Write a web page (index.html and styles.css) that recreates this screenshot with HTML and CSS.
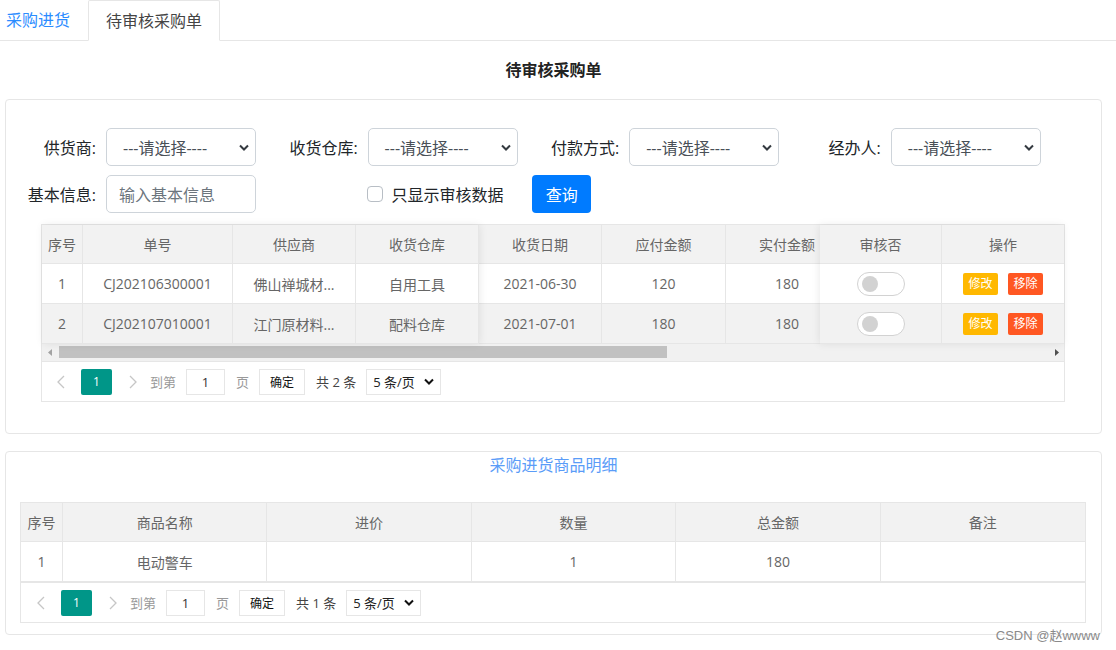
FILE: index.html
```html
<!DOCTYPE html>
<html lang="zh-CN">
<head>
<meta charset="utf-8">
<title>待审核采购单</title>
<link rel="stylesheet" href="styles.css">
</head>
<body>
<div class="tabs">
  <div class="tab tab-link">采购进货</div>
  <div class="tab tab-active">待审核采购单</div>
</div>

<main class="content">
  <h2 class="page-title">待审核采购单</h2>

  <section class="panel panel-main">
    <div class="form-row">
      <div class="field">
        <label class="field-label">供货商:</label>
        <div class="select"><span>---请选择----</span><svg class="chev" width="10" height="7" viewBox="0 0 10 7"><path d="M1 1.5l4 4 4-4" fill="none" stroke="#343a40" stroke-width="2"/></svg></div>
      </div>
      <div class="field">
        <label class="field-label">收货仓库:</label>
        <div class="select"><span>---请选择----</span><svg class="chev" width="10" height="7" viewBox="0 0 10 7"><path d="M1 1.5l4 4 4-4" fill="none" stroke="#343a40" stroke-width="2"/></svg></div>
      </div>
      <div class="field">
        <label class="field-label">付款方式:</label>
        <div class="select"><span>---请选择----</span><svg class="chev" width="10" height="7" viewBox="0 0 10 7"><path d="M1 1.5l4 4 4-4" fill="none" stroke="#343a40" stroke-width="2"/></svg></div>
      </div>
      <div class="field">
        <label class="field-label">经办人:</label>
        <div class="select"><span>---请选择----</span><svg class="chev" width="10" height="7" viewBox="0 0 10 7"><path d="M1 1.5l4 4 4-4" fill="none" stroke="#343a40" stroke-width="2"/></svg></div>
      </div>
    </div>
    <div class="form-row">
      <div class="field">
        <label class="field-label">基本信息:</label>
        <div class="text-input"><span class="placeholder">输入基本信息</span></div>
      </div>
      <div class="check-field"><span class="checkbox"></span><span>只显示审核数据</span></div>
      <button class="btn-primary">查询</button>
    </div>

    <div class="data-table">
      <div class="panes">
        <div class="pane pane-left">
          <div class="cell head">序号</div><div class="cell head">单号</div><div class="cell head">供应商</div><div class="cell head">收货仓库</div>
          <div class="cell">1</div><div class="cell">CJ202106300001</div><div class="cell">佛山禅城材...</div><div class="cell">自用工具</div>
          <div class="cell alt">2</div><div class="cell alt">CJ202107010001</div><div class="cell alt">江门原材料...</div><div class="cell alt">配料仓库</div>
        </div>
        <div class="pane pane-mid">
          <div class="cell head">收货日期</div><div class="cell head">应付金额</div><div class="cell head">实付金额</div>
          <div class="cell">2021-06-30</div><div class="cell">120</div><div class="cell">180</div>
          <div class="cell alt">2021-07-01</div><div class="cell alt">180</div><div class="cell alt">180</div>
        </div>
        <div class="pane pane-right">
          <div class="cell head">审核否</div><div class="cell head last">操作</div>
          <div class="cell"><span class="switch"><span class="knob"></span></span></div>
          <div class="cell last"><span class="btn-xs warm">修改</span><span class="btn-xs danger">移除</span></div>
          <div class="cell alt"><span class="switch"><span class="knob"></span></span></div>
          <div class="cell alt last"><span class="btn-xs warm">修改</span><span class="btn-xs danger">移除</span></div>
        </div>
      </div>
      <div class="hscroll">
        <span class="sb-arrow"><svg width="4" height="7" viewBox="0 0 4 7"><path d="M4 0v7L0 3.5z" fill="#a3a3a3"/></svg></span>
        <span class="sb-thumb"></span>
        <span class="sb-fill"></span>
        <span class="sb-arrow"><svg width="4" height="7" viewBox="0 0 4 7"><path d="M0 0v7l4-3.5z" fill="#505050"/></svg></span>
      </div>
      <div class="pager">
        <svg class="pg-arrow" width="8" height="14" viewBox="0 0 8 14"><path d="M7 1L1 7l6 6" stroke="#c6c6c6" fill="none" stroke-width="1.3"/></svg>
        <span class="pg-current">1</span>
        <svg class="pg-arrow pg-next" width="8" height="14" viewBox="0 0 8 14"><path d="M1 1l6 6-6 6" stroke="#c6c6c6" fill="none" stroke-width="1.3"/></svg>
        <span class="pg-text">到第</span>
        <span class="pg-input">1</span>
        <span class="pg-text">页</span>
        <span class="pg-btn">确定</span>
        <span class="pg-count">共 2 条</span>
        <span class="pg-select"><span>5 条/页</span><svg width="10" height="7" viewBox="0 0 10 7"><path d="M1 1.5l4 4 4-4" fill="none" stroke="#111" stroke-width="2"/></svg></span>
      </div>
    </div>
  </section>

  <section class="panel panel-detail">
    <h3 class="detail-title">采购进货商品明细</h3>
    <div class="detail-table">
      <div class="detail-grid">
        <div class="cell head">序号</div><div class="cell head">商品名称</div><div class="cell head">进价</div><div class="cell head">数量</div><div class="cell head">总金额</div><div class="cell head last">备注</div>
        <div class="cell">1</div><div class="cell">电动警车</div><div class="cell"></div><div class="cell">1</div><div class="cell">180</div><div class="cell last"></div>
      </div>
      <div class="pager pager-detail">
        <svg class="pg-arrow" width="8" height="14" viewBox="0 0 8 14"><path d="M7 1L1 7l6 6" stroke="#c6c6c6" fill="none" stroke-width="1.3"/></svg>
        <span class="pg-current">1</span>
        <svg class="pg-arrow pg-next" width="8" height="14" viewBox="0 0 8 14"><path d="M1 1l6 6-6 6" stroke="#c6c6c6" fill="none" stroke-width="1.3"/></svg>
        <span class="pg-text">到第</span>
        <span class="pg-input">1</span>
        <span class="pg-text">页</span>
        <span class="pg-btn">确定</span>
        <span class="pg-count">共 1 条</span>
        <span class="pg-select"><span>5 条/页</span><svg width="10" height="7" viewBox="0 0 10 7"><path d="M1 1.5l4 4 4-4" fill="none" stroke="#111" stroke-width="2"/></svg></span>
      </div>
    </div>
  </section>
</main>

<div class="watermark">CSDN @赵wwww</div>
</body>
</html>
```

FILE: styles.css
```css
* { box-sizing: border-box; }

body {
  margin: 0;
  width: 1116px;
  height: 650px;
  overflow: hidden;
  position: relative;
  background: #fff;
  color: #333;
  font-family: "Open Sans", "Noto Sans CJK SC", sans-serif;
}

/* tabs */
.tabs {
  display: flex;
  height: 41px;
  border-bottom: 1px solid #e6e6e6;
}
.tab {
  height: 41px;
  line-height: 40px;
  font-size: 16px;
}
.tab-link {
  color: #2b8cff;
  padding: 0 16px 0 6px;
  width: 88px;
}
.tab-active {
  color: #444;
  background: #fff;
  border: 1px solid #e6e6e6;
  border-bottom-color: #fff;
  border-radius: 2px 2px 0 0;
  padding: 0 16px 0 17px;
  width: 132px;
}

.content {
  margin: 0 14px 0 5px;
}

.page-title {
  margin: 18px 0 18px;
  text-align: center;
  font-size: 16px;
  line-height: 22px;
  font-weight: bold;
  color: #222;
}

.panel {
  border: 1px solid #e6e6e6;
  border-radius: 4px;
  background: #fff;
}
.panel-main {
  padding: 28px 0 31px;
}

/* form */
.form-row {
  display: flex;
  align-items: center;
  gap: 11.6px;
  height: 38px;
  margin-bottom: 9px;
}
.form-row:nth-child(2) { margin-bottom: 11px; }
.field {
  display: flex;
  align-items: center;
}
.field-label {
  width: 90px;
  margin-right: 10px;
  text-align: right;
  font-size: 16px;
  color: #212529;
}
.select, .text-input {
  width: 150px;
  height: 38px;
  border: 1px solid #ced4da;
  border-radius: 5px;
  display: flex;
  align-items: center;
  font-size: 16px;
  color: #495057;
}
.select {
  padding: 0 6px 0 16px;
  justify-content: space-between;
}
.text-input { padding: 0 12px; }
.placeholder { color: #6c757d; }

.check-field {
  display: flex;
  align-items: center;
  gap: 9px;
  margin-left: 99px;
  font-size: 16px;
  color: #212529;
}
.checkbox {
  width: 16px;
  height: 16px;
  border: 1px solid #b8bec5;
  border-radius: 4px;
}
.btn-primary {
  margin-left: 17px;
  width: 59px;
  height: 38px;
  border: none;
  border-radius: 4px;
  background: #007bff;
  color: #fff;
  font-size: 16px;
  font-family: inherit;
  padding: 0;
}

/* data table */
.data-table {
  margin-left: 35px;
  width: 1024px;
  border: 1px solid #e6e6e6;
  font-size: 14px;
  color: #666;
}
.panes {
  display: flex;
}
.pane {
  display: grid;
  background: #fff;
}
.pane-left {
  grid-template-columns: 41px 150px 123px 123px;
  grid-template-rows: 39px 40px 40px;
  position: relative;
  z-index: 1;
  box-shadow: 1px 0 8px rgba(0, 0, 0, 0.08);
}
.pane-mid {
  flex: 1;
  overflow: hidden;
  grid-template-columns: 123px 124px 123px;
  grid-template-rows: 39px 40px 40px;
}
.pane-right {
  grid-template-columns: 122px 122px;
  grid-template-rows: 39px 40px 40px;
  position: relative;
  z-index: 1;
  box-shadow: -1px 0 8px rgba(0, 0, 0, 0.08);
}
.cell {
  display: flex;
  align-items: center;
  justify-content: center;
  gap: 10px;
  border-right: 1px solid #e6e6e6;
  border-bottom: 1px solid #e6e6e6;
  white-space: nowrap;
  background: #fff;
}
.cell.head { background: #f2f2f2; }
.cell.alt { background: #f2f2f2; }
.cell.last { border-right: none; }

.switch {
  width: 48px;
  height: 24px;
  border: 1px solid #d2d2d2;
  border-radius: 20px;
  background: #fff;
  display: flex;
  align-items: center;
  padding-left: 4px;
}
.knob {
  width: 16px;
  height: 16px;
  border-radius: 50%;
  background: #d2d2d2;
}
.btn-xs {
  width: 35px;
  height: 22px;
  line-height: 22px;
  border-radius: 2px;
  color: #fff;
  font-size: 12px;
  text-align: center;
}
.btn-xs.warm { background: #ffb800; }
.btn-xs.danger { background: #ff5722; }

.hscroll {
  display: flex;
  align-items: center;
  height: 17px;
  background: #f1f1f1;
}
.sb-arrow {
  width: 15px;
  height: 17px;
  display: flex;
  align-items: center;
  justify-content: center;
}
.sb-thumb {
  width: 608px;
  height: 12px;
  margin: 0 0 1px 2px;
  background: #c1c1c1;
}
.sb-fill { flex: 1; }

/* pager */
.pager {
  height: 40px;
  border-top: 1px solid #e6e6e6;
  display: flex;
  align-items: center;
  padding-left: 15px;
  font-size: 12px;
  color: #666;
}
.pg-arrow { margin-right: 16px; }
.pg-next { margin: 0 13px 0 17px; }
.pg-current {
  width: 31px;
  height: 26px;
  line-height: 26px;
  text-align: center;
  background: #009688;
  color: #fff;
  border-radius: 2px;
}
.pg-text {
  color: #999;
  font-size: 13px;
}
.pg-input {
  width: 39px;
  height: 26px;
  line-height: 24px;
  border: 1px solid #e6e6e6;
  text-align: center;
  margin: 0 11px 0 10px;
  color: #333;
  font-size: 13px;
}
.pg-btn {
  width: 46px;
  height: 26px;
  line-height: 26px;
  border: 1px solid #e6e6e6;
  text-align: center;
  margin-left: 10px;
  color: #111;
  font-weight: normal;
}
.pg-count {
  margin: 0 10px 0 11px;
  color: #444;
  font-size: 13px;
}
.pg-select {
  width: 75px;
  height: 26px;
  border: 1px solid #e6e6e6;
  display: flex;
  align-items: center;
  justify-content: space-between;
  padding: 0 6px 0 6px;
  color: #222;
  font-size: 13px;
}

/* detail */
.panel-detail {
  margin-top: 17px;
  padding: 2px 0 11px;
}
.detail-title {
  margin: 0 0 26px;
  text-align: center;
  font-size: 16px;
  line-height: 22px;
  font-weight: normal;
  color: #5a9cf8;
}
.detail-table {
  margin-left: 14px;
  width: 1066px;
  border: 1px solid #e6e6e6;
  font-size: 14px;
  color: #666;
}
.detail-grid {
  display: grid;
  grid-template-columns: 42px repeat(5, 1fr);
  grid-template-rows: 39px 40px;
}
.pager-detail { padding-left: 16px; }

.watermark {
  position: absolute;
  right: 16px;
  top: 625px;
  font-family: "Liberation Sans", "Noto Sans CJK SC", sans-serif;
  font-size: 13px;
  color: #8a8a8a;
}
```
